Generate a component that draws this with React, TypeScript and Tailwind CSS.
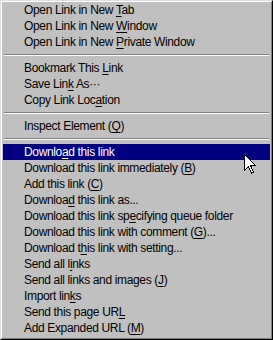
import React from 'react';

type Item = { sep: true } | { label: React.ReactNode; active?: boolean };

// underline the access key
const U: React.FC<{ children: React.ReactNode }> = ({ children }) => (
  <span className="underline underline-offset-[2px]">{children}</span>
);

const items: Item[] = [
  { label: <>Open Link in New <U>T</U>ab</> },
  { label: <>Open Link in New <U>W</U>indow</> },
  { label: <>Open Link in New <U>P</U>rivate Window</> },
  { sep: true },
  { label: <>Bookmark This <U>L</U>ink</> },
  { label: <>Save Lin<U>k</U> As···</> },
  { label: <>Copy Link Loc<U>a</U>tion</> },
  { sep: true },
  { label: <>Inspect Element (<U>Q</U>)</> },
  { sep: true },
  { label: <>Downlo<U>a</U>d this link</>, active: true },
  { label: <>Download this link immediately (<U>B</U>)</> },
  { label: <>Add this link (<U>C</U>)</> },
  { label: <>Downloa<U>d</U> this link as...</> },
  { label: <>Download this link sp<U>e</U>cifying queue folder</> },
  { label: <>Download this link with comment (<U>G</U>)...</> },
  { label: <>Download t<U>h</U>is link with setting...</> },
  { label: <>Send all l<U>i</U>nks</> },
  { label: <>Send all links and images (<U>J</U>)</> },
  { label: <>Import lin<U>k</U>s</> },
  { label: <>Send this page UR<U>L</U></> },
  { label: <>Add Expanded URL (<U>M</U>)</> },
];

const Cursor = () => (
  <svg
    className="absolute left-[243px] top-[153px]"
    width="13"
    height="20"
    viewBox="0 0 13 20"
    shapeRendering="crispEdges"
  >
    <path
      d="M0.5 0.5 L0.5 16.5 L4.5 12.5 L7.5 19 L9.5 18 L6.5 11.5 L11.5 11.5 Z"
      fill="#fff"
      stroke="#000"
      strokeWidth="1"
    />
  </svg>
);

export default function App() {
  return (
    <div className="relative w-[273px] h-[340px] bg-[#c0c0c0] border border-t-[#dfdfdf] border-l-[#dfdfdf] border-r-black border-b-black">
      <div
        className="h-full border border-t-white border-l-white border-r-[#808080] border-b-[#808080] px-[1px] pb-[2px] text-[12px] leading-[16px] tracking-[-0.35px] text-black"
        style={{ fontFamily: '"Liberation Sans", Arial, sans-serif' }}
      >
        {items.map((it, i) =>
          'sep' in it ? (
            <div key={i} className="h-[10px] flex flex-col justify-center px-[1px]">
              <div className="h-[1px] bg-[#808080]" />
              <div className="h-[1px] bg-white" />
            </div>
          ) : (
            <div
              key={i}
              className={`h-[16px] pl-[21px] whitespace-nowrap ${
                it.active ? 'bg-[#000080] text-white' : ''
              }`}
            >
              {it.label}
            </div>
          )
        )}
      </div>
      <Cursor />
    </div>
  );
}
